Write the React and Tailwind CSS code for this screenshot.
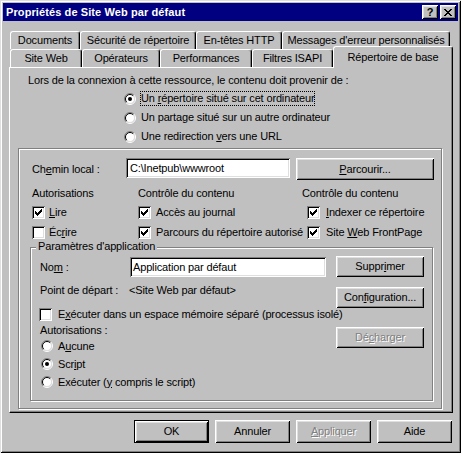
import React from "react";

const raised =
  "shadow-[inset_1px_1px_0_#fff,inset_-1px_-1px_0_#000,inset_2px_2px_0_#dfdfdf,inset_-2px_-2px_0_#808080]";
const sunken =
  "shadow-[inset_1px_1px_0_#808080,inset_-1px_-1px_0_#fff,inset_2px_2px_0_#000,inset_-2px_-2px_0_#dfdfdf]";
const etched = "border border-[#808080] shadow-[inset_1px_1px_0_#fff,1px_1px_0_#fff]";

function Check({ checked }) {
  return (
    <span className={`w-[13px] h-[13px] bg-white shrink-0 flex items-center justify-center ${sunken}`}>
      {checked && (
        <svg width="7" height="7" viewBox="0 0 7 7" shapeRendering="crispEdges">
          <path
            d="M6 0h1v1h-1z M5 1h2v1h-2z M0 2h1v1h-1z M4 2h3v1h-3z M0 3h2v1h-2z M3 3h3v1h-3z M0 4h5v1h-5z M1 5h3v1h-3z M2 6h1v1h-1z"
            fill="#000"
          />
        </svg>
      )}
    </span>
  );
}

function Radio({ on }) {
  return (
    <svg width="12" height="12" viewBox="0 0 12 12" className="shrink-0">
      <path d="M2.1 9.9 A5.5 5.5 0 0 1 9.9 2.1" fill="none" stroke="#808080" />
      <path d="M9.9 2.1 A5.5 5.5 0 0 1 2.1 9.9" fill="none" stroke="#fff" />
      <circle cx="6" cy="6" r="4.5" fill="#fff" />
      <path d="M2.8 9.2 A4.5 4.5 0 0 1 9.2 2.8" fill="none" stroke="#000" />
      <path d="M9.2 2.8 A4.5 4.5 0 0 1 2.8 9.2" fill="none" stroke="#dfdfdf" />
      {on && <circle cx="6" cy="6" r="2" fill="#000" />}
    </svg>
  );
}

function Button({ children, className = "", disabled }) {
  return (
    <div
      className={`bg-[#c0c0c0] flex items-center justify-center ${raised} ${
        disabled ? "text-[#808080] [text-shadow:1px_1px_0_#fff]" : ""
      } ${className}`}
    >
      <span>{children}</span>
    </div>
  );
}

function Tab({ label, w }) {
  return (
    <div
      className={`${w} h-[18px] bg-[#c0c0c0] flex items-center justify-center border-t border-l border-white border-r border-r-black rounded-t-[3px] shadow-[inset_-1px_0_0_#808080]`}
    >
      {label}
    </div>
  );
}

function TitleBar() {
  return (
    <div className="h-[18px] bg-[#000080] flex items-center justify-between pl-[3px] pr-[2px]">
      <span className="text-white font-bold tracking-[0.1px]">Propriétés de Site Web par défaut</span>
      <div className="flex gap-[2px]">
        <div className={`w-[16px] h-[14px] bg-[#c0c0c0] flex items-center justify-center font-bold ${raised}`}>
          <span className="leading-[11px]">?</span>
        </div>
        <div className={`w-[16px] h-[14px] bg-[#c0c0c0] flex items-center justify-center ${raised}`}>
          <svg width="8" height="7" viewBox="0 0 8 7" shapeRendering="crispEdges">
            <path
              d="M0 0h2v1h-2z M6 0h2v1h-2z M1 1h2v1h-2z M5 1h2v1h-2z M2 2h4v1h-4z M3 3h2v1h-2z M2 4h4v1h-4z M1 5h2v1h-2z M5 5h2v1h-2z M0 6h2v1h-2z M6 6h2v1h-2z"
              fill="#000"
            />
          </svg>
        </div>
      </div>
    </div>
  );
}

export default function App() {
  return (
    <div className="w-[461px] h-[453px] bg-[#c0c0c0] p-[3px] flex flex-col text-black text-[11px] leading-[13px] tracking-[-0.15px] whitespace-nowrap font-['Liberation_Sans',Arial,sans-serif] shadow-[inset_1px_1px_0_#dfdfdf,inset_-1px_-1px_0_#000,inset_2px_2px_0_#fff,inset_-2px_-2px_0_#808080] select-none">
      <TitleBar />

      {/* tabs, back row */}
      <div className="flex h-[18px] ml-[7px] mt-[10px]">
        <Tab label="Documents" w="w-[70px]" />
        <Tab label="Sécurité de répertoire" w="w-[116px]" />
        <Tab label="En-têtes HTTP" w="w-[86px]" />
        <Tab label="Messages d'erreur personnalisés" w="w-[168px]" />
      </div>
      {/* tabs, front row */}
      <div className="flex items-end h-[18px] ml-[7px]">
        <Tab label="Site Web" w="w-[72px]" />
        <Tab label="Opérateurs" w="w-[78px]" />
        <Tab label="Performances" w="w-[92px]" />
        <Tab label="Filtres ISAPI" w="w-[81px]" />
        <div className="relative z-10 w-[120px] h-[22px] -mb-[1px] bg-[#c0c0c0] flex items-start justify-center pt-[4px] border-t border-l border-white border-r border-r-black rounded-t-[3px] shadow-[inset_-1px_0_0_#808080]">
          Répertoire de base
        </div>
      </div>

      {/* page */}
      <div className="ml-[6px] w-[444px] h-[346px] flex flex-col border-t border-l border-white border-r border-b border-r-black border-b-black shadow-[inset_-1px_-1px_0_#808080] pt-[6px]">
        <div className="pl-[18px]">Lors de la connexion à cette ressource, le contenu doit provenir de :</div>
        <div className="ml-[114px] mt-[2px] flex flex-col">
          <div className="h-[19px] flex items-center gap-[4px]">
            <Radio on />
            <span className="border border-dotted border-black">
              Un <u>r</u>épertoire situé sur cet ordinateur
            </span>
          </div>
          <div className="h-[19px] flex items-center gap-[4px]">
            <Radio />
            <span className="border border-transparent">Un partage situé sur un autre ordinateur</span>
          </div>
          <div className="h-[19px] flex items-center gap-[4px]">
            <Radio />
            <span className="border border-transparent">
              Une redirection <u>v</u>ers une URL
            </span>
          </div>
        </div>

        <div className={`ml-[8px] mt-[2px] w-[424px] h-[261px] flex flex-col pl-[11px] pt-[9px] ${etched}`}>
          <div className="pl-[2px]">
            <div className="flex items-start h-[22px]">
              <span className="w-[94px] mt-[5px]">
                Ch<u>e</u>min local :
              </span>
              <div className={`w-[164px] h-[20px] bg-white flex items-center pl-[4px] ${sunken}`}>
                C:\Inetpub\wwwroot
              </div>
              <Button className="ml-[6px] w-[138px] h-[22px]">
                <u>P</u>arcourir...
              </Button>
            </div>

            <div className="flex mt-[7px]">
              <span className="w-[106px]">Autorisations</span>
              <span className="w-[164px]">Contrôle du contenu</span>
              <span>Contrôle du contenu</span>
            </div>
            <div className="flex mt-[2px]">
              <div className="w-[106px] flex flex-col">
                <div className="h-[20px] flex items-center gap-[4px]">
                  <Check checked />
                  <span>
                    <u>L</u>ire
                  </span>
                </div>
                <div className="h-[20px] flex items-center gap-[4px]">
                  <Check />
                  <span>
                    Éc<u>r</u>ire
                  </span>
                </div>
              </div>
              <div className="w-[164px] flex flex-col">
                <div className="h-[20px] flex items-center gap-[5px]">
                  <Check checked />
                  <span>Accès au journal</span>
                </div>
                <div className="h-[20px] flex items-center gap-[5px]">
                  <Check checked />
                  <span>Parcours du répertoire autorisé</span>
                </div>
              </div>
              <div className="pl-[5px] flex flex-col">
                <div className="h-[20px] flex items-center gap-[6px]">
                  <Check checked />
                  <span>
                    <u>I</u>ndexer ce répertoire
                  </span>
                </div>
                <div className="h-[20px] flex items-center gap-[6px]">
                  <Check checked />
                  <span>
                    Site <u>W</u>eb FrontPage
                  </span>
                </div>
              </div>
            </div>
          </div>

          {/* application settings */}
          <div className={`relative mt-[5px] w-[403px] h-[154px] flex flex-col pl-[8px] pt-[8px] ${etched}`}>
            <span className="absolute -top-[8px] left-[5px] px-[2px] bg-[#c0c0c0]">Paramètres d'application</span>

            <div className="flex items-start h-[21px]">
              <span className="w-[91px] mt-[5px] pl-[1px]">
                No<u>m</u> :
              </span>
              <div className={`w-[196px] h-[20px] mt-[1px] bg-white flex items-center pl-[3px] ${sunken}`}>
                Application par défaut
              </div>
              <Button className="ml-[10px] w-[88px] h-[21px]">
                Suppr<u>i</u>mer
              </Button>
            </div>

            <div className="flex items-start mt-[7px] h-[24px]">
              <span className="w-[90px] pl-[1px]">Point de départ :</span>
              <span className="w-[207px]">&lt;Site Web par défaut&gt;</span>
              <Button className="mt-[3px] w-[88px] h-[21px]">
                Con<u>f</u>iguration...
              </Button>
            </div>

            <div className="flex items-center gap-[6px] h-[13px]">
              <Check />
              <span>
                E<u>x</u>écuter dans un espace mémoire séparé (processus isolé)
              </span>
            </div>

            <div className="flex items-start mt-[3px]">
              <div className="w-[297px] flex flex-col">
                <span className="pl-[1px]">Autorisations :</span>
                <div className="flex flex-col pl-[2px]">
                  <div className="h-[18px] flex items-center gap-[5px]">
                    <Radio />
                    <span>
                      A<u>u</u>cune
                    </span>
                  </div>
                  <div className="h-[18px] flex items-center gap-[5px]">
                    <Radio on />
                    <span>
                      Scr<u>i</u>pt
                    </span>
                  </div>
                  <div className="h-[18px] flex items-center gap-[5px]">
                    <Radio />
                    <span>
                      Exécuter (<u>y</u> compris le script)
                    </span>
                  </div>
                </div>
              </div>
              <Button disabled className="mt-[3px] w-[88px] h-[21px]">
                Dé<u>c</u>harger
              </Button>
            </div>
          </div>
        </div>
      </div>

      {/* dialog buttons */}
      <div className="mt-[7px] flex justify-end gap-[6px] pr-[6px]">
        <div className="w-[75px] h-[23px] border border-black flex">
          <Button className="flex-1">OK</Button>
        </div>
        <Button className="w-[75px] h-[23px]">Annuler</Button>
        <Button disabled className="w-[75px] h-[23px]">
          <u>A</u>ppliquer
        </Button>
        <Button className="w-[75px] h-[23px]">Aide</Button>
      </div>
    </div>
  );
}
